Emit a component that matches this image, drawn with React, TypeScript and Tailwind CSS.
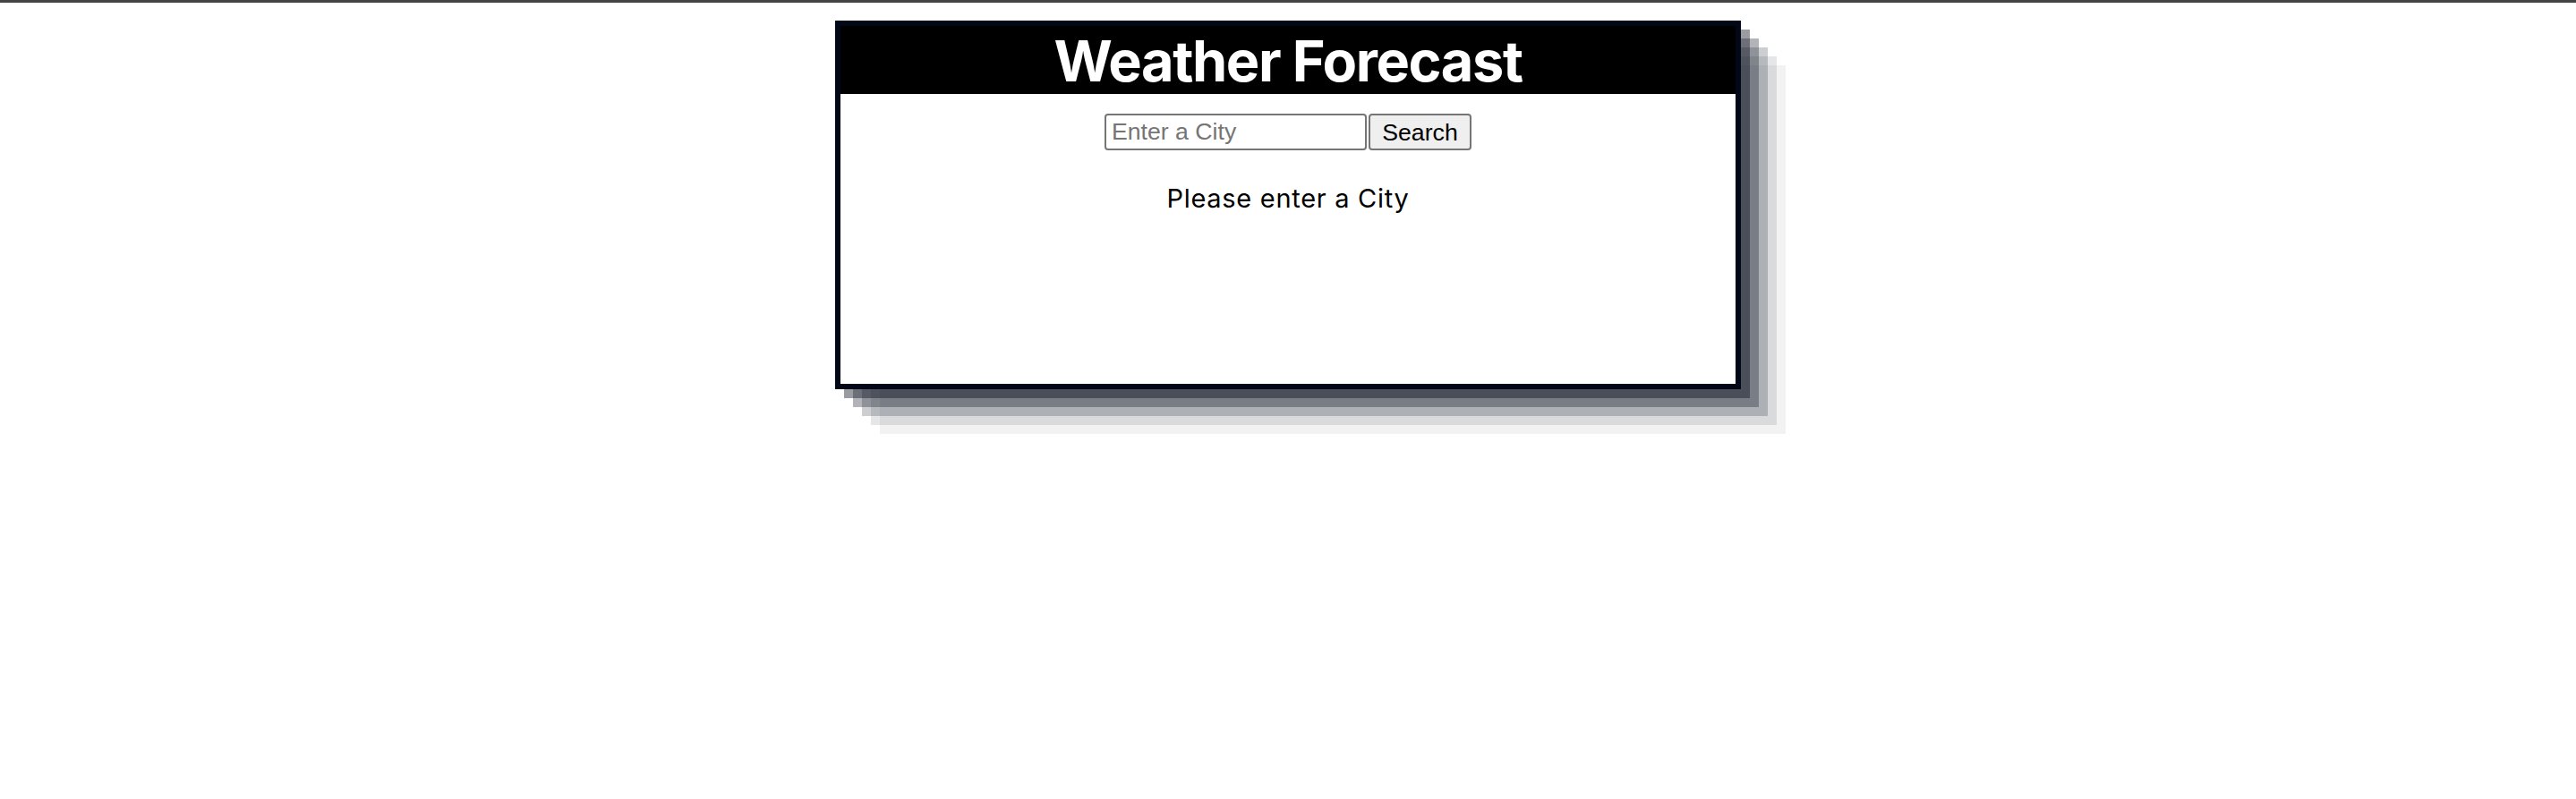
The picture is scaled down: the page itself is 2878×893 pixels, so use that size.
import React from 'react';

export default function App() {
  return (
    <div className="min-h-screen bg-white" style={{ fontFamily: 'Inter, "Noto Sans", sans-serif' }}>
      <div className="h-[3px] bg-[#444444]" />
      <div className="flex justify-center pt-[20px]">
        <div className="w-[1012px] h-[412px] border-[6px] border-[#020817] bg-white shadow-[10px_10px_0_rgba(2,8,23,0.4),20px_20px_0_rgba(2,8,23,0.3),30px_30px_0_rgba(2,8,23,0.2),40px_40px_0_rgba(2,8,23,0.1),50px_50px_0_rgba(2,8,23,0.05)]">
          <div className="h-[76px] bg-black flex items-center justify-center">
            <h1 className="text-[63px] leading-[76px] font-bold text-white tracking-[-1.4px] translate-y-[1px]">Weather Forecast</h1>
          </div>
          <div className="mt-[22px] flex justify-center gap-[2px]">
            <input
              type="text"
              placeholder="Enter a City"
              className="w-[293px] h-[41px] border-2 border-[#767676] rounded-[4px] pl-[6px] text-[26.67px] text-black placeholder:text-[#757575] outline-none"
              style={{ fontFamily: '"Liberation Sans", Arial, sans-serif' }}
            />
            <button
              className="w-[115px] h-[41px] border-2 border-[#767676] rounded-[4px] bg-[#efefef] text-[26.67px] text-black flex items-center justify-center"
              style={{ fontFamily: '"Liberation Sans", Arial, sans-serif' }}
            >
              Search
            </button>
          </div>
          <p className="mt-[37px] text-center text-[29px] leading-[34px] tracking-[0.7px] text-black">Please enter a City</p>
        </div>
      </div>
    </div>
  );
}
